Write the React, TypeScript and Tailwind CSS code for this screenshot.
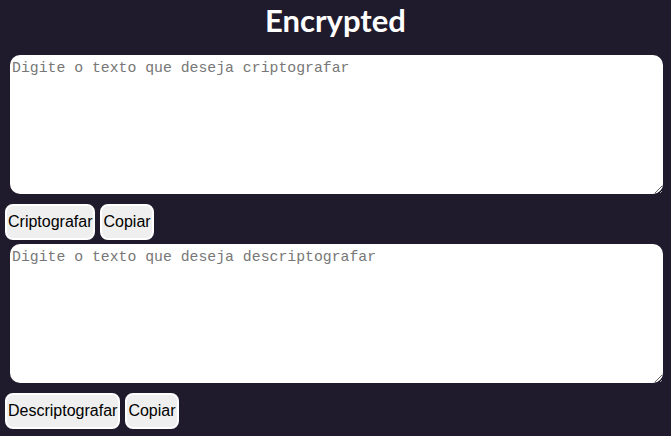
import { useState } from "react";

export default function App() {
  const [texto, setTexto] = useState<string>("");
  const [cifrado, setCifrado] = useState<string>("");

  return (
    <div className="min-h-screen w-full bg-[#1f1b2d] pt-[1px]">
      <h1 className="h-[43px] text-center text-[31px] leading-[38px] font-bold text-white font-['Comic_Sans_MS','Lato',sans-serif]">
        Encrypted
      </h1>

      <div className="mt-[11px] flex flex-col">
        <textarea
          value={texto}
          onChange={(e) => setTexto(e.target.value)}
          placeholder="Digite o texto que deseja criptografar"
          className="ml-[10px] h-[139px] w-[653px] rounded-[10px] bg-white px-[2px] py-[4px] text-[14.8px] leading-[18px] text-black placeholder:text-[#777] outline-none font-['Liberation_Mono',monospace]"
        />
        <div className="mt-[10px] ml-[5px] flex gap-[5px]">
          <button className="h-[36px] rounded-[8px] border-2 border-white bg-[#efefef] px-[1px] text-[16px] text-black font-['Liberation_Sans',Arial,sans-serif]">
            Criptografar
          </button>
          <button className="h-[36px] rounded-[8px] border-2 border-white bg-[#efefef] px-[1px] text-[16px] text-black font-['Liberation_Sans',Arial,sans-serif]">
            Copiar
          </button>
        </div>

        <textarea
          value={cifrado}
          onChange={(e) => setCifrado(e.target.value)}
          placeholder="Digite o texto que deseja descriptografar"
          className="mt-[4px] ml-[10px] h-[139px] w-[653px] rounded-[10px] bg-white px-[2px] py-[4px] text-[14.8px] leading-[18px] text-black placeholder:text-[#777] outline-none font-['Liberation_Mono',monospace]"
        />
        <div className="mt-[10px] ml-[5px] flex gap-[5px]">
          <button className="h-[36px] rounded-[8px] border-2 border-white bg-[#efefef] px-[1px] text-[16px] text-black font-['Liberation_Sans',Arial,sans-serif]">
            Descriptografar
          </button>
          <button className="h-[36px] rounded-[8px] border-2 border-white bg-[#efefef] px-[1px] text-[16px] text-black font-['Liberation_Sans',Arial,sans-serif]">
            Copiar
          </button>
        </div>
      </div>
    </div>
  );
}
